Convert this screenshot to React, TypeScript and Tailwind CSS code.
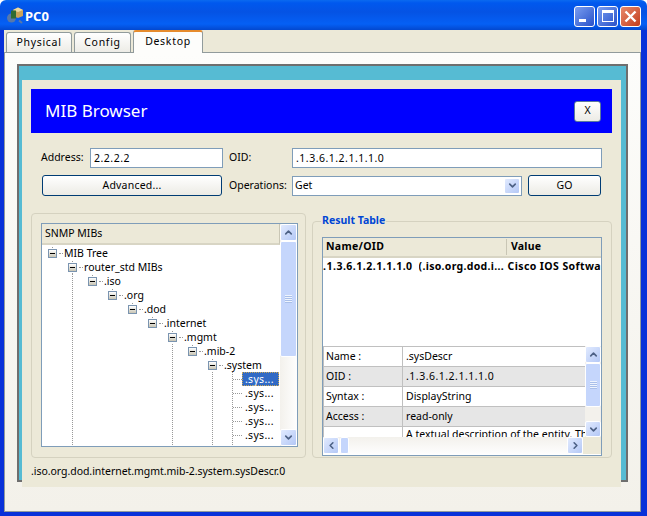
import { ChevronDown, ChevronLeft, ChevronRight, ChevronUp } from "lucide-react"

const font = "font-['Noto_Sans','DejaVu_Sans',sans-serif]"

const ScrollArrow = ({ dir, className = "" }: { dir: "up" | "down" | "left" | "right"; className?: string }) => {
    const Icon = { up: ChevronUp, down: ChevronDown, left: ChevronLeft, right: ChevronRight }[dir]
    return (
        <div className={`flex items-center justify-center rounded-[2px] border border-white bg-linear-to-br from-[#e1eafe] to-[#b4c8f6] ${className}`}>
            <Icon size={11} strokeWidth={3.5} className="text-[#4d6185]" />
        </div>
    )
}

const Grip = () => (
    <div className="h-[8px] w-[7px] bg-[repeating-linear-gradient(#eef4fe_0px,#eef4fe_1px,#a9bfe9_1px,#a9bfe9_2px)]" />
)

const Expander = () => (
    <div className="relative flex h-[9px] w-[9px] shrink-0 items-center justify-center border border-[#7a94b0] bg-linear-to-b from-white to-[#c9c5b4]">
        <div className="h-px w-[5px] bg-black" />
        <div className="absolute -top-[3px] left-[3px] h-px w-px bg-[#999]" />
    </div>
)

const treeRows = [
    { label: "MIB Tree", depth: 0 },
    { label: "router_std MIBs", depth: 1 },
    { label: ".iso", depth: 2 },
    { label: ".org", depth: 3 },
    { label: ".dod", depth: 4 },
    { label: ".internet", depth: 5 },
    { label: ".mgmt", depth: 6 },
    { label: ".mib-2", depth: 7 },
    { label: ".system", depth: 8 },
]

const leafRows = [".sys...", ".sys...", ".sys...", ".sys...", ".sys..."]

const TreeRow = ({ label, depth }: { label: string; depth: number }) => (
    <div className="relative flex h-[14px] items-center" style={{ paddingLeft: 6 + depth * 20 }}>
        <Expander />
        <div className="ml-[2px] w-[4px] border-t border-dotted border-[#999]" />
        <span className="ml-px whitespace-nowrap leading-none">{label}</span>
    </div>
)

// the only vertical guide lines the tree draws
const guideLines = [
    { left: 30, top: 28, height: 176 },
    { left: 130, top: 99, height: 105 },
    { left: 170, top: 127, height: 77 },
    { left: 190, top: 127, height: 77 },
]

const SnmpTree = () => (
    <div className="flex h-[224px] w-[257px] border border-[#7f9db9] bg-white">
        <div className="flex min-w-0 flex-1 flex-col">
            <div className="flex h-[21px] shrink-0 items-center border-r border-b-2 border-r-[#c9c6b5] border-b-[#d8d5c4] bg-[#ece9d8] pl-[3px]">
                SNMP MIBs
            </div>
            <div className="relative flex-1 overflow-hidden pt-px">
                {guideLines.map((l) => (
                    <div
                        key={l.left}
                        className="absolute border-l border-dotted border-[#999]"
                        style={{ left: l.left, top: l.top, height: l.height }}
                    />
                ))}
                {treeRows.map((r) => (
                    <TreeRow key={r.label} label={r.label} depth={r.depth} />
                ))}
                {leafRows.map((label, i) => (
                    <div key={i} className="relative flex h-[14px] items-center pl-[191px]">
                        <div className="w-[9px] border-t border-dotted border-[#999]" />
                        <span
                            className={`flex h-[14px] w-[37px] items-center whitespace-nowrap pl-[3px] leading-none tracking-[0.3px] ${
                                i === 0 ? "bg-[#316ac5] text-white outline-1 -outline-offset-1 outline-dotted outline-[#c9a858]" : ""
                            }`}
                        >
                            {label}
                        </span>
                    </div>
                ))}
            </div>
        </div>
        <div className="flex w-[17px] shrink-0 flex-col bg-linear-to-r from-[#f3f1ec] to-[#fefefe]">
            <ScrollArrow dir="up" className="h-[17px] w-[17px]" />
            <div className="flex h-[116px] w-[17px] items-center justify-center rounded-[2px] border border-white bg-[#c5d6fc]">
                <Grip />
            </div>
            <div className="flex-1" />
            <ScrollArrow dir="down" className="h-[17px] w-[17px]" />
        </div>
    </div>
)

const detailRows = [
    { name: "Name :", value: ".sysDescr", shade: false },
    { name: "OID :", value: ".1.3.6.1.2.1.1.1.0", shade: true },
    { name: "Syntax :", value: "DisplayString", shade: false },
    { name: "Access :", value: "read-only", shade: true },
]

const DetailsTable = () => (
    <div className="flex h-[109px] flex-col">
        <div className="flex h-[91px] min-h-0">
            <div className="min-w-0 flex-1 overflow-hidden border-t border-l border-[#c0c0c0]">
                {detailRows.map((r) => (
                    <div key={r.name} className={`flex h-[20px] items-center ${r.shade ? "bg-[#e6e6e6]" : "bg-white"}`}>
                        <div className="flex h-full w-[79px] shrink-0 items-center border-r border-b border-[#c0c0c0] pl-[2px]">{r.name}</div>
                        <div className={`flex h-full flex-1 items-center whitespace-nowrap border-b border-[#c0c0c0] pl-[3px] ${r.name === "OID :" ? "tracking-[0.5px]" : ""}`}>
                            {r.value}
                        </div>
                    </div>
                ))}
                <div className="flex h-[20px] bg-white">
                    <div className="w-[79px] shrink-0 overflow-hidden whitespace-nowrap border-r border-[#c0c0c0] pl-[2px] pt-[9px] leading-none">Description :</div>
                    <div className="whitespace-nowrap pl-[3px] leading-[14px]">A textual description of the entity. The</div>
                </div>
            </div>
            <div className="flex w-[16px] shrink-0 flex-col bg-[#f3f1ec]">
                <ScrollArrow dir="up" className="h-[17px] w-[16px]" />
                <div className="flex h-[44px] w-[16px] items-center justify-center rounded-[2px] border border-white bg-[#c5d6fc]">
                    <Grip />
                </div>
                <div className="flex-1" />
                <ScrollArrow dir="down" className="h-[16px] w-[16px]" />
            </div>
        </div>
        <div className="flex h-[17px] shrink-0 bg-linear-to-b from-[#f3f1ec] to-[#fefefe]">
            <ScrollArrow dir="left" className="h-[17px] w-[16px]" />
            <div className="ml-px h-[17px] w-[9px] rounded-[2px] border border-white bg-[#c5d6fc]" />
            <div className="flex-1" />
            <ScrollArrow dir="right" className="h-[17px] w-[16px]" />
            <div className="w-[18px] bg-[#ece9d8]" />
        </div>
    </div>
)

const ResultTable = () => (
    <div className="flex h-[219px] w-[280px] flex-col overflow-hidden border border-[#7f9db9] bg-white">
        <div className="flex h-[20px] shrink-0 items-center border-b-2 border-[#d8d5c4] bg-[#ece9d8] font-bold">
            <div className="w-[184px] shrink-0 border-r border-[#c9c6b5] pl-[3px] tracking-[0.3px]">Name/OID</div>
            <div className="pl-[4px] tracking-[0.2px]">Value</div>
        </div>
        <div className="flex h-[88px] shrink-0 items-start overflow-hidden whitespace-nowrap font-bold">
            <div className="mt-[1px] tracking-[0.5px]">.1.3.6.1.2.1.1.1.0</div>
            <div className="mt-[1px] ml-[6px] w-[89px] shrink-0 overflow-hidden tracking-[0.3px]">(.iso.org.dod.i...</div>
            <div className="mt-[1px] tracking-[0.4px]">Cisco IOS Softwa</div>
        </div>
        <DetailsTable />
    </div>
)

const XpButton = ({ label, className = "" }: { label: string; className?: string }) => (
    <button className={`flex items-center justify-center rounded-[3px] border border-[#003c74] bg-linear-to-b from-white to-[#ecebe5] ${className}`}>
        {label}
    </button>
)

const CaptionButton = ({ kind }: { kind: "min" | "max" | "close" }) => (
    <div
        className={`flex h-[21px] w-[21px] items-center justify-center rounded-[3px] border border-white ${
            kind === "close" ? "bg-linear-to-br from-[#e8886b] to-[#c23b18]" : "bg-linear-to-br from-[#7a9df0] to-[#2a50c8]"
        }`}
    >
        {kind === "min" && <div className="mt-[9px] mr-[5px] h-[3px] w-[7px] bg-white" />}
        {kind === "max" && <div className="h-[12px] w-[12px] border border-t-[3px] border-white" />}
        {kind === "close" && (
            <svg width="13" height="13" viewBox="0 0 13 13">
                <path d="M1.5 1.5 L11.5 11.5 M11.5 1.5 L1.5 11.5" stroke="white" strokeWidth="2.4" />
            </svg>
        )}
    </div>
)

const Tab = ({ label, width, active = false }: { label: string; width: string; active?: boolean }) =>
    active ? (
        <div className={`relative z-10 flex h-[23px] items-center justify-center rounded-t-[3px] border-x border-[#919b9c] border-t-2 border-t-[#e68b2c] bg-[#fdfdfb] pb-[2px] tracking-[0.7px] ${width}`}>
            {label}
        </div>
    ) : (
        <div className={`flex h-[21px] items-center justify-center rounded-t-[3px] border-x border-t border-[#919b9c] bg-linear-to-b from-white to-[#ecebe5] tracking-[0.7px] ${width}`}>
            {label}
        </div>
    )

export default function App() {
    return (
        <div className={`flex h-[516px] w-[647px] flex-col overflow-hidden bg-white text-[10.5px] text-black ${font}`}>
            {/* title bar */}
            <div className="flex h-[30px] shrink-0 items-center rounded-t-[6px] bg-[linear-gradient(#0a6af0_0px,#0058ee_3px,#0553e4_12px,#0560f5_24px,#0348cf_30px)] pl-[6px] pr-[6px]">
                <svg width="17" height="17" viewBox="0 0 17 17" className="mt-px">
                    <circle cx="5.5" cy="11" r="4.5" fill="#5878a8" />
                    <path d="M13 13.5 L16 16" stroke="#5878a8" strokeWidth="2" />
                    <path d="M7 3 L12 0.5 L17 3 L17 9 L12 11 L7 9 Z" fill="#c9a35a" />
                    <path d="M7 3 L12 0.5 L17 3 L12 5 Z" fill="#ecd9a0" />
                    <rect x="5" y="3.5" width="5" height="8" fill="#2f6b33" />
                </svg>
                <span className="mt-[3px] ml-[2px] text-[13px] font-bold text-white">PC0</span>
                <div className="mt-[2px] ml-auto flex gap-[2px]">
                    <CaptionButton kind="min" />
                    <CaptionButton kind="max" />
                    <CaptionButton kind="close" />
                </div>
            </div>

            {/* client */}
            <div className="flex min-h-0 flex-1 flex-col bg-[#0831d9] pl-[4px] pr-[6px] pb-[4px]">
                <div className="flex min-h-0 flex-1 flex-col bg-[#ece9d8]">
                    <div className="flex h-[22px] shrink-0 items-end pl-[2px]">
                        <Tab label="Physical" width="w-[66px] -mb-px" />
                        <Tab label="Config" width="ml-[2px] w-[57px] -mb-px" />
                        <Tab label="Desktop" width="ml-[2px] w-[70px] -mb-px" active />
                    </div>

                    <div className="flex flex-1 flex-col border border-[#919b9c] bg-linear-to-b from-[#fdfdfb] to-[#f3f1ea] pt-[11px] pl-[12px] pr-[11px]">
                        <div className="h-[418px] w-[611px] border-2 border-[#6e6e6e] bg-[#56bbd3] pl-[3px] pt-[14px] pr-[5px]">
                            <div className="flex h-[407px] flex-col bg-[#ece9d8] px-[9px] pt-[9px]">
                                <div className="flex h-[44px] shrink-0 items-center justify-between bg-[#0000ff] pl-[14px] pr-[11px]">
                                    <span className="text-[17px] text-white">MIB Browser</span>
                                    <XpButton label="X" className="h-[21px] w-[27px] border-[#5b7a9c]" />
                                </div>

                                <div className="mt-[15px] flex items-center">
                                    <div className="ml-[10px] w-[49px]">Address:</div>
                                    <input readOnly value="2.2.2.2" className="h-[20px] w-[133px] border border-[#7f9db9] bg-white pl-[3px] tracking-[0.5px] outline-none" />
                                    <div className="ml-[6px] w-[63px]">OID:</div>
                                    <input readOnly value=".1.3.6.1.2.1.1.1.0" className="h-[20px] w-[310px] border border-[#7f9db9] bg-white pl-[3px] tracking-[0.5px] outline-none" />
                                </div>

                                <div className="mt-[7px] flex items-center">
                                    <XpButton label="Advanced..." className="ml-[11px] h-[21px] w-[180px] tracking-[0.2px]" />
                                    <div className="ml-[7px] w-[63px]">Operations:</div>
                                    <div className="flex h-[20px] w-[230px] items-center justify-between border border-[#7f9db9] bg-white pl-[2px] pr-[1px]">
                                        Get
                                        <ScrollArrow dir="down" className="h-[16px] w-[16px]" />
                                    </div>
                                    <XpButton label="GO" className="ml-[6px] h-[21px] w-[73px]" />
                                </div>

                                <div className="mt-[17px] flex gap-[6px]">
                                    <div className="h-[245px] w-[275px] rounded-[4px] border border-[#d5d2c0] pl-[9px] pt-[9px]">
                                        <SnmpTree />
                                    </div>
                                    <div className="relative mt-[8px] h-[237px] w-[300px] rounded-[4px] border border-[#d5d2c0] pl-[9px] pt-[15px]">
                                        <span className="absolute -top-[9px] left-[8px] bg-[#ece9d8] px-px font-bold text-[#0046d5]">Result Table</span>
                                        <ResultTable />
                                    </div>
                                </div>

                                <div className="mt-[6px] whitespace-nowrap tracking-[-0.04px]">.iso.org.dod.internet.mgmt.mib-2.system.sysDescr.0</div>
                            </div>
                        </div>
                    </div>
                </div>
            </div>
        </div>
    )
}
